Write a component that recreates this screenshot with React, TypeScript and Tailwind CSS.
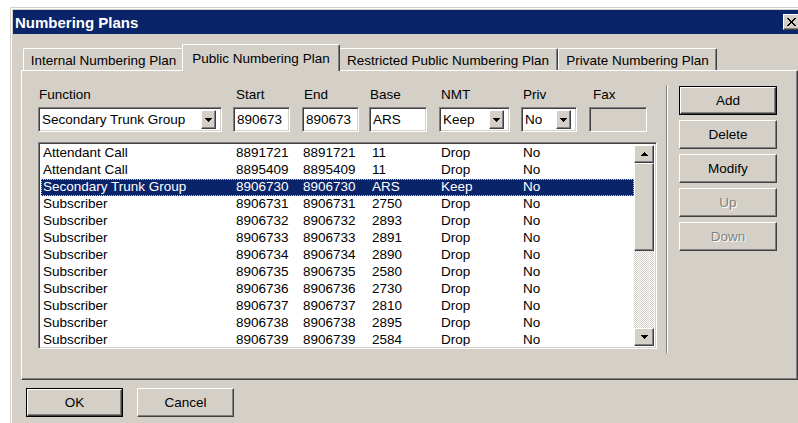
import React from 'react';

// classic 3D borders
const raised =
  'border border-t-white border-l-white border-r-[#404040] border-b-[#404040] shadow-[inset_-1px_-1px_0_#808080] bg-[#d4d0c8]';
const sunken =
  'border border-t-[#808080] border-l-[#808080] border-b-white border-r-white shadow-[inset_1px_1px_0_#404040,inset_-1px_-1px_0_#d4d0c8]';

type Row = { fn: string; start: string; end: string; base: string; nmt: string; priv: string };

const rows: Row[] = [
  { fn: 'Attendant Call', start: '8891721', end: '8891721', base: '11', nmt: 'Drop', priv: 'No' },
  { fn: 'Attendant Call', start: '8895409', end: '8895409', base: '11', nmt: 'Drop', priv: 'No' },
  { fn: 'Secondary Trunk Group', start: '8906730', end: '8906730', base: 'ARS', nmt: 'Keep', priv: 'No' },
  { fn: 'Subscriber', start: '8906731', end: '8906731', base: '2750', nmt: 'Drop', priv: 'No' },
  { fn: 'Subscriber', start: '8906732', end: '8906732', base: '2893', nmt: 'Drop', priv: 'No' },
  { fn: 'Subscriber', start: '8906733', end: '8906733', base: '2891', nmt: 'Drop', priv: 'No' },
  { fn: 'Subscriber', start: '8906734', end: '8906734', base: '2890', nmt: 'Drop', priv: 'No' },
  { fn: 'Subscriber', start: '8906735', end: '8906735', base: '2580', nmt: 'Drop', priv: 'No' },
  { fn: 'Subscriber', start: '8906736', end: '8906736', base: '2730', nmt: 'Drop', priv: 'No' },
  { fn: 'Subscriber', start: '8906737', end: '8906737', base: '2810', nmt: 'Drop', priv: 'No' },
  { fn: 'Subscriber', start: '8906738', end: '8906738', base: '2895', nmt: 'Drop', priv: 'No' },
  { fn: 'Subscriber', start: '8906739', end: '8906739', base: '2584', nmt: 'Drop', priv: 'No' },
];

const tabs = [
  { label: 'Internal Numbering Plan', w: 'w-[161px]' },
  { label: 'Public Numbering Plan', w: 'w-[158px]', active: true },
  { label: 'Restricted Public Numbering Plan', w: 'w-[220px]' },
  { label: 'Private Numbering Plan', w: 'w-[159px]' },
];

const Arrow = ({ up = false }: { up?: boolean }) => (
  <svg width="7" height="4" viewBox="0 0 7 4" shapeRendering="crispEdges" className={up ? 'rotate-180' : ''}>
    <path d="M0 0h7v1h-1v1h-1v1h-1v1h-1v-1h-1v-1h-1v-1h-1z" fill="#000" />
  </svg>
);

const Combo = ({ value, w }: { value: string; w: string }) => (
  <div className={`${sunken} ${w} h-[25px] bg-white flex items-center pl-[3px]`}>
    <span>{value}</span>
    <div className={`${raised} ml-auto mr-[5px] w-[15px] h-[19px] flex items-center justify-center`}>
      <Arrow />
    </div>
  </div>
);

const Field = ({ value, w, disabled }: { value?: string; w: string; disabled?: boolean }) => (
  <div className={`${sunken} ${w} h-[25px] flex items-center pl-[3px] ${disabled ? 'bg-[#d4d0c8]' : 'bg-white'}`}>
    {value}
  </div>
);

const Button = ({ label, isDefault, disabled }: { label: string; isDefault?: boolean; disabled?: boolean }) => {
  const face = (
    <div
      className={`${raised} h-full flex items-center justify-center ${
        disabled ? 'text-[#808080] [text-shadow:1px_1px_0_#fff]' : 'text-black'
      }`}
    >
      {label}
    </div>
  );
  return isDefault ? <div className="h-[29px] border border-black">{face}</div> : <div className="h-[29px]">{face}</div>;
};

export default function App() {
  return (
    <div className="w-[798px] h-[423px] overflow-hidden bg-white pt-[7px] pl-[10px] font-['Liberation_Sans',Arial,sans-serif] text-[13.5px] text-black leading-[17px]">
      <div className="w-[790px] h-[420px] bg-[#d4d0c8] border-l border-t border-[#d4d0c8] shadow-[inset_1px_1px_0_#fff] p-[2px] pr-0 flex flex-col">
        {/* title bar */}
        <div className="h-[24px] bg-[#0a246a] flex items-center justify-between pl-[2px]">
          <span className="text-white font-bold text-[15px]">Numbering Plans</span>
          <div className={`${raised} w-[17px] h-[16px] flex items-center justify-center`}>
            <svg width="9" height="8" viewBox="0 0 9 8" shapeRendering="crispEdges">
              <path d="M0 0L8 8M8 0L0 8" stroke="#000" strokeWidth="2" transform="translate(0.5 0)" />
            </svg>
          </div>
        </div>

        <div className="flex flex-col pl-[8px] pr-[2px] pt-[10px]">
          {/* tabs */}
          <div className="flex items-end pl-[2px] h-[26px]">
            {tabs.map((t) =>
              t.active ? (
                <div
                  key={t.label}
                  className={`${t.w} -mx-[2px] -mb-px h-[27px] relative z-10 bg-[#d4d0c8] border-t border-l border-white border-r border-r-[#404040] shadow-[inset_-1px_0_0_#808080] rounded-t-[2px] flex items-start justify-center pt-[5px]`}
                >
                  {t.label}
                </div>
              ) : (
                <div
                  key={t.label}
                  className={`${t.w} h-[22px] border-t border-l border-white border-r border-r-[#404040] shadow-[inset_-1px_0_0_#808080] rounded-t-[2px] flex items-start justify-center pt-[3px]`}
                >
                  {t.label}
                </div>
              )
            )}
          </div>

          {/* tab page */}
          <div className="h-[310px] border border-t-white border-l-white border-r-[#404040] border-b-[#404040] shadow-[inset_-1px_-1px_0_#808080] pl-[16px] pt-[15px] flex">
            <div className="w-[619px] flex flex-col">
              <div className="flex h-[17px]">
                <div className="w-[184px] pl-px">Function</div>
                <div className="w-[57px] ml-[11px] pl-[3px]">Start</div>
                <div className="w-[57px] ml-[12px] pl-[2px]">End</div>
                <div className="w-[58px] ml-[10px] pl-px">Base</div>
                <div className="w-[71px] ml-[12px] pl-[2px]">NMT</div>
                <div className="w-[56px] ml-[11px] pl-[2px]">Priv</div>
                <div className="w-[58px] ml-[12px] pl-[4px]">Fax</div>
              </div>
              <div className="flex mt-[4px]">
                <Combo value="Secondary Trunk Group" w="w-[184px]" />
                <div className="ml-[11px]"><Field value="890673" w="w-[57px]" /></div>
                <div className="ml-[12px]"><Field value="890673" w="w-[57px]" /></div>
                <div className="ml-[10px]"><Field value="ARS" w="w-[58px]" /></div>
                <div className="ml-[12px]"><Combo value="Keep" w="w-[71px]" /></div>
                <div className="ml-[11px]"><Combo value="No" w="w-[56px]" /></div>
                <div className="ml-[12px]"><Field w="w-[58px]" disabled /></div>
              </div>

              {/* list */}
              <div className={`${sunken} mt-[10px] h-[207px] bg-white flex p-[2px]`}>
                <div className="flex-1 overflow-hidden">
                  {rows.map((r, i) => {
                    const sel = i === 2;
                    return (
                      <div
                        key={i}
                        className={`flex h-[17px] leading-[15px] pl-[2px] whitespace-nowrap ${
                          sel ? 'bg-[#0a246a] text-white outline-1 outline-dotted outline-[#d8cf9a] -outline-offset-1' : ''
                        }`}
                      >
                        <span className="w-[193px]">{r.fn}</span>
                        <span className="w-[67px]">{r.start}</span>
                        <span className="w-[69px]">{r.end}</span>
                        <span className="w-[69px]">{r.base}</span>
                        <span className="w-[82px]">{r.nmt}</span>
                        <span>{r.priv}</span>
                      </div>
                    );
                  })}
                </div>
                <div className="w-[20px] flex flex-col">
                  <div className={`${raised} h-[18px] flex items-center justify-center`}>
                    <Arrow up />
                  </div>
                  <div className={`${raised} h-[88px]`} />
                  <div className="flex-1 [background:repeating-conic-gradient(#d4d0c8_0%_25%,#ffffff_0%_50%)_0_0/2px_2px]" />
                  <div className={`${raised} h-[18px] flex items-center justify-center`}>
                    <Arrow />
                  </div>
                </div>
              </div>
            </div>

            {/* etched separator */}
            <div className="ml-[9px] -mt-px w-[2px] h-[268px] border-l border-l-[#808080] border-r border-r-white" />

            {/* side buttons */}
            <div className="ml-[11px] w-[98px] flex flex-col gap-[5px]">
              <Button label="Add" isDefault />
              <Button label="Delete" />
              <Button label="Modify" />
              <Button label="Up" disabled />
              <Button label="Down" disabled />
            </div>
          </div>

          {/* dialog buttons */}
          <div className="flex mt-[8px] pl-[5px] gap-[14px]">
            <div className="w-[97px]"><Button label="OK" isDefault /></div>
            <div className="w-[97px]"><Button label="Cancel" /></div>
          </div>
        </div>
      </div>
    </div>
  );
}
